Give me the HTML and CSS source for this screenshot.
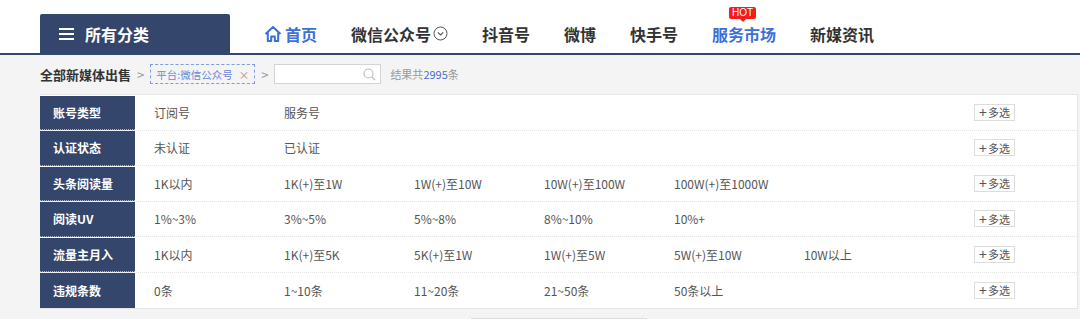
FILE: index.html
```html
<!DOCTYPE html>
<html lang="zh-CN">
<head>
    <meta charset="UTF-8">
    <meta name="viewport" content="width=device-width, initial-scale=1.0">
    <title>新媒体出售</title>
    <link rel="stylesheet" href="styles.css">
</head>
<body>
    <div class="header">
        <div class="header-inner">
            <div class="category-box">
                <span class="menu-icon"><i></i><i></i><i></i></span>
                <span>所有分类</span>
            </div>
            <ul class="nav">
                <li class="nav-item active">
                    <svg class="home-icon" width="18" height="18" viewBox="0 0 18 18">
                        <path d="M1.5 9 L9 2 L16.5 9 M3.8 7 V16 H7.2 V11.5 H10.8 V16 H14.2 V7" fill="none" stroke="#3d6fd9" stroke-width="2" stroke-linejoin="round"/>
                    </svg>
                    首页
                </li>
                <li class="nav-item">
                    微信公众号
                    <svg class="down-icon" width="15" height="15" viewBox="0 0 15 15">
                        <circle cx="7.5" cy="7.5" r="6.5" fill="none" stroke="#555" stroke-width="1"/>
                        <path d="M4.8 6.3 L7.5 9 L10.2 6.3" fill="none" stroke="#555" stroke-width="1.1"/>
                    </svg>
                </li>
                <li class="nav-item">抖音号</li>
                <li class="nav-item">微博</li>
                <li class="nav-item">快手号</li>
                <li class="nav-item active hot-item">
                    <span class="hot-badge">HOT</span>
                    服务市场
                </li>
                <li class="nav-item">新媒资讯</li>
            </ul>
        </div>
    </div>

    <div class="main">
        <div class="crumbs">
            <span class="crumb-title">全部新媒体出售</span>
            <span class="crumb-arrow">&gt;</span>
            <span class="crumb-tag">平台:微信公众号 <span class="tag-close">×</span></span>
            <span class="crumb-arrow">&gt;</span>
            <div class="search-box">
                <svg width="13" height="13" viewBox="0 0 13 13">
                    <circle cx="5.5" cy="5.5" r="4.5" fill="none" stroke="#bbb" stroke-width="1.1"/>
                    <path d="M8.8 8.8 L12 12" stroke="#bbb" stroke-width="1.2"/>
                </svg>
            </div>
            <span class="result">结果共<em>2995</em>条</span>
        </div>

        <div class="filter-table">
            <div class="filter-row">
                <div class="filter-label">账号类型</div>
                <div class="filter-values">
                    <span>订阅号</span><span>服务号</span>
                </div>
                <button class="multi-btn"><b>+</b>多选</button>
            </div>
            <div class="filter-row">
                <div class="filter-label">认证状态</div>
                <div class="filter-values">
                    <span>未认证</span><span>已认证</span>
                </div>
                <button class="multi-btn"><b>+</b>多选</button>
            </div>
            <div class="filter-row">
                <div class="filter-label">头条阅读量</div>
                <div class="filter-values">
                    <span>1K以内</span><span>1K(+)至1W</span><span>1W(+)至10W</span><span>10W(+)至100W</span><span>100W(+)至1000W</span>
                </div>
                <button class="multi-btn"><b>+</b>多选</button>
            </div>
            <div class="filter-row">
                <div class="filter-label">阅读UV</div>
                <div class="filter-values">
                    <span>1%~3%</span><span>3%~5%</span><span>5%~8%</span><span>8%~10%</span><span>10%+</span>
                </div>
                <button class="multi-btn"><b>+</b>多选</button>
            </div>
            <div class="filter-row">
                <div class="filter-label">流量主月入</div>
                <div class="filter-values">
                    <span>1K以内</span><span>1K(+)至5K</span><span>5K(+)至1W</span><span>1W(+)至5W</span><span>5W(+)至10W</span><span>10W以上</span>
                </div>
                <button class="multi-btn"><b>+</b>多选</button>
            </div>
            <div class="filter-row">
                <div class="filter-label">违规条数</div>
                <div class="filter-values">
                    <span>0条</span><span>1~10条</span><span>11~20条</span><span>21~50条</span><span>50条以上</span>
                </div>
                <button class="multi-btn"><b>+</b>多选</button>
            </div>
        </div>

        <div class="more-box"></div>
    </div>
</body>
</html>
```

FILE: styles.css
```css
body {
    margin: 0;
    padding: 0;
    background-color: #f4f4f4;
    font-family: "Microsoft YaHei", "Noto Sans CJK SC", "Liberation Sans", sans-serif;
    color: #333;
    overflow: hidden;
}
.header {
    background-color: #fff;
    border-bottom: 2px solid #34466b;
    height: 53px;
}
.header-inner {
    display: flex;
    align-items: flex-end;
    height: 53px;
    padding-left: 40px;
}
.category-box {
    width: 190px;
    height: 39px;
    box-sizing: border-box;
    padding-left: 19px;
    display: flex;
    align-items: center;
    gap: 11px;
    background-color: #34466b;
    color: #fff;
    font-size: 16px;
    font-weight: bold;
    border-radius: 2px 2px 0 0;
}
.menu-icon {
    display: flex;
    flex-direction: column;
    gap: 3px;
    width: 15px;
}
.menu-icon i {
    display: block;
    height: 2px;
    background-color: #fff;
}
.nav {
    list-style: none;
    margin: 0 0 0 34px;
    padding: 0;
    display: flex;
    align-items: center;
    gap: 34px;
    height: 53px;
    padding-top: 14px;
    box-sizing: border-box;
}
.nav-item {
    position: relative;
    display: flex;
    align-items: center;
    font-size: 16px;
    font-weight: bold;
    color: #333;
    white-space: nowrap;
}
.nav-item.active {
    color: #3d6fd9;
}
.home-icon {
    margin-right: 3px;
}
.down-icon {
    margin-left: 2px;
}
.hot-badge {
    position: absolute;
    top: -15px;
    left: 17px;
    background-color: #f51c1c;
    color: #fff;
    font-size: 10px;
    font-weight: normal;
    line-height: 12px;
    padding: 0 3px;
    border-radius: 2px;
    font-family: "Liberation Sans", Arial, sans-serif;
}
.hot-badge::after {
    content: "";
    position: absolute;
    left: 50%;
    bottom: -3px;
    margin-left: -3px;
    border-left: 3px solid transparent;
    border-right: 3px solid transparent;
    border-top: 3px solid #f51c1c;
}
.main {
    padding: 9px 2px 0 40px;
}
.crumbs {
    display: flex;
    align-items: center;
    height: 20px;
    font-size: 12px;
}
.crumb-title {
    font-size: 13px;
    font-weight: bold;
    color: #333;
}
.crumb-arrow {
    color: #999;
    margin: 0 6px;
    font-size: 13px;
}
.crumb-tag {
    height: 20px;
    box-sizing: border-box;
    border: 1px dashed #7d9de0;
    color: #6a8ad8;
    padding: 0 5px 0 5px;
    display: flex;
    align-items: center;
    gap: 6px;
    white-space: nowrap;
    font-size: 10.5px;
}
.tag-close {
    color: #999;
}
.search-box {
    width: 107px;
    height: 20px;
    box-sizing: border-box;
    border: 1px solid #d4d4d4;
    background-color: #fff;
    display: flex;
    align-items: center;
    justify-content: flex-end;
    padding-right: 4px;
}
.result {
    margin-left: 9px;
    font-size: 11px;
    color: #999;
}
.result em {
    font-style: normal;
    color: #4a6fd0;
}
.filter-table {
    margin-top: 10px;
    background-color: #fff;
    border: 1px solid #e6e6e6;
    border-left: none;
}
.filter-row {
    display: flex;
    align-items: center;
    height: 35.5px;
    border-bottom: 1px dotted #e4e4e4;
    box-sizing: border-box;
}
.filter-row:last-child {
    border-bottom: none;
}
.filter-label {
    width: 95px;
    height: 100%;
    box-sizing: border-box;
    padding-left: 13px;
    display: flex;
    align-items: center;
    background-color: #34466b;
    color: #fff;
    font-size: 12px;
    font-weight: bold;
    border-bottom: 1px dotted #a9b4c9;
    margin-bottom: -1px;
}
.filter-row:last-child .filter-label {
    border-bottom: none;
    margin-bottom: 0;
}
.filter-values {
    flex: 1;
    display: flex;
    padding-left: 19px;
    font-size: 12px;
    color: #555;
}
.filter-values span {
    width: 130px;
}
.multi-btn {
    margin-right: 62px;
    height: 17px;
    width: 41px;
    padding: 0;
    border: 1px solid #ddd;
    background-color: #fff;
    color: #555;
    font-size: 11px;
    font-family: inherit;
    display: flex;
    align-items: center;
    justify-content: center;
}
.multi-btn b {
    font-weight: normal;
    font-size: 14px;
    margin-right: 1px;
    line-height: 14px;
}
.more-box {
    width: 174px;
    height: 20px;
    margin: 9px auto 0;
    background-color: #fff;
    border: 1px solid #ddd;
}
```
